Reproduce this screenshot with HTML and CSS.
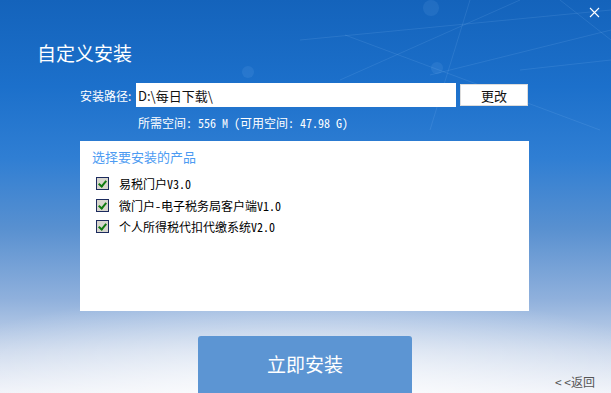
FILE: index.html
```html
<!DOCTYPE html>
<html lang="zh-CN">
<head>
  <meta charset="UTF-8" />
  <meta name="viewport" content="width=device-width, initial-scale=1" />
  <title>自定义安装</title>
  <link rel="stylesheet" href="styles.css">
</head>
<body>

  <div class="window">
    <!-- faint decorative lines in the backdrop -->
    <svg class="backdrop" width="611" height="393" viewBox="0 0 611 393">
      <g stroke="#9fd0ff" stroke-opacity="0.13" stroke-width="1" fill="none">
        <line x1="300" y1="40" x2="611" y2="10" />
        <line x1="340" y1="80" x2="520" y2="0" />
        <line x1="345" y1="35" x2="600" y2="130" />
        <line x1="470" y1="0" x2="430" y2="130" />
        <line x1="430" y1="75" x2="611" y2="30" />
        <line x1="520" y1="70" x2="611" y2="60" />
        <line x1="560" y1="0" x2="611" y2="40" />
      </g>
      <g fill="#9fd0ff" fill-opacity="0.1">
        <circle cx="431" cy="8" r="8" />
        <circle cx="437" cy="68" r="6" />
        <circle cx="248" cy="72" r="6" />
      </g>
    </svg>

    <div class="topbar">
      <button class="close" title="关闭">
        <svg width="11" height="11" viewBox="0 0 11 11">
          <path d="M1 1 L10 10 M10 1 L1 10" stroke="#fff" stroke-width="1.1" fill="none" />
        </svg>
      </button>
    </div>

    <h1 class="title">自定义安装</h1>

    <div class="path-row">
      <label for="path">安装路径:</label>
      <input type="text" id="path" value="D:\每日下载\" />
      <button class="change">更改</button>
    </div>

    <p class="space">所需空间: 556 M (可用空间: 47.98 G)</p>

    <div class="products">
      <div class="products-title">选择要安装的产品</div>
      <label class="product"><span class="check"></span>易税门户V3.0</label>
      <label class="product"><span class="check"></span>微门户-电子税务局客户端V1.0</label>
      <label class="product"><span class="check"></span>个人所得税代扣代缴系统V2.0</label>
    </div>

    <div class="footer">
      <button class="install">立即安装</button>
      <a class="back" href="#">&lt; &lt;返回</a>
    </div>
  </div>

</body>
</html>
```

FILE: styles.css
```css
body {
  margin: 0;
  font-family: "Noto Sans CJK SC", sans-serif;
}
.window {
  position: relative;
  width: 611px;
  height: 393px;
  overflow: hidden;
  display: flex;
  flex-direction: column;
  color: #fff;
  background:
    radial-gradient(ellipse 420px 110px at 300px 400px, rgba(255,255,255,0.85), rgba(255,255,255,0) 100%),
    linear-gradient(to bottom, #1463bb 0%, #1c70cb 22%, #2f7ed3 40%, #5890d0 58%, #8fb0dc 76%, #c8d6eb 89%, #eef1f8 100%);
}
.backdrop {
  position: absolute;
  top: 0;
  left: 0;
  pointer-events: none;
}
.topbar {
  position: relative;
  height: 24px;
  display: flex;
  justify-content: flex-end;
}
.close {
  width: 24px;
  height: 24px;
  margin-right: 5px;
  padding: 0;
  border: none;
  background: none;
  display: flex;
  align-items: center;
  justify-content: center;
  cursor: pointer;
}
.title {
  position: relative;
  margin: 17px 0 0 37px;
  font-size: 19px;
  font-weight: normal;
  line-height: 24px;
}
.path-row {
  position: relative;
  margin: 18px 0 0 80px;
  display: flex;
  align-items: center;
  height: 24px;
}
.path-row label {
  font-size: 12px;
  width: 56px;
}
.path-row input {
  width: 320px;
  height: 24px;
  box-sizing: border-box;
  border: none;
  padding: 1px 2px 0;
  font-family: "Noto Sans CJK SC", sans-serif;
  font-size: 13px;
  color: #111;
  outline: none;
}
.change {
  margin-left: 4px;
  width: 68px;
  height: 22px;
  border: 1px solid #dcdcdc;
  background: #fff;
  font-family: "Noto Sans CJK SC", sans-serif;
  font-size: 13px;
  color: #111;
  padding: 0;
  cursor: pointer;
}
.space {
  position: relative;
  margin: 8px 0 0 138px;
  font-family: "Noto Sans Mono CJK SC", "Noto Sans CJK SC", monospace;
  font-size: 12px;
  line-height: 16px;
  white-space: pre;
}
.products {
  position: relative;
  margin: 10px 0 0 80px;
  width: 449px;
  height: 170px;
  box-sizing: border-box;
  padding: 7px 0 0 12px;
  background: #fff;
  color: #000;
}
.products-title {
  font-size: 13px;
  line-height: 18px;
  color: #4c9bf2;
  margin-bottom: 7px;
}
.product {
  display: flex;
  align-items: center;
  gap: 10px;
  height: 21.5px;
  padding-left: 4px;
  font-family: "Noto Sans Mono CJK SC", "Noto Sans CJK SC", monospace;
  font-size: 12px;
  cursor: pointer;
}
.check {
  width: 13px;
  height: 13px;
  box-sizing: border-box;
  border: 1px solid #1c2b5e;
  background: #d8d6ce;
  position: relative;
}
.check::after {
  content: "";
  position: absolute;
  left: 3px;
  top: 1px;
  width: 3px;
  height: 6px;
  border: solid #0f7a10;
  border-width: 0 2px 2px 0;
  transform: rotate(40deg);
}
.footer {
  position: relative;
  margin-top: 25px;
  flex: 1;
  display: flex;
  align-items: flex-end;
  padding: 0 16px 3px 198px;
}
.install {
  align-self: stretch;
  width: 214px;
  margin-bottom: -3px;
  border: none;
  border-radius: 3px 3px 0 0;
  background: #5c95d3;
  color: #fff;
  font-family: "Noto Sans CJK SC", sans-serif;
  font-size: 19px;
  padding: 0 0 2px;
  cursor: pointer;
}
.back {
  margin-left: auto;
  font-size: 12px;
  line-height: 16px;
  color: #555;
  text-decoration: none;
}
```
